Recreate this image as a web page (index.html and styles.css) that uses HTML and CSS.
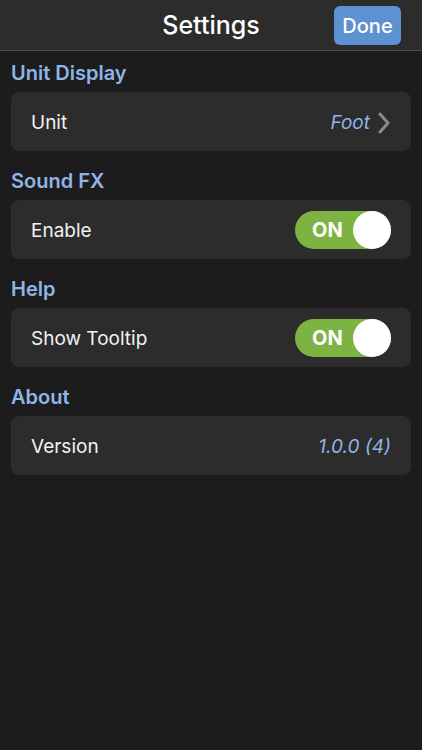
FILE: index.html
```html
<!DOCTYPE html>
<html lang="en">
<head>
    <meta charset="UTF-8">
    <meta name="viewport" content="width=device-width, initial-scale=1.0">
    <title>Settings</title>
    <link rel="stylesheet" href="styles.css">
</head>
<body>
    <nav class="navbar">
        <h1>Settings</h1>
        <a href="#" class="done-button">Done</a>
    </nav>

    <div class="container">
        <div class="section">
            <h2>Unit Display</h2>
            <div class="row">
                <span>Unit</span>
                <span class="value">Foot
                    <svg class="chevron" width="14" height="22" viewBox="0 0 14 22">
                        <path d="M3 2 L11 11 L3 20" fill="none" stroke="#8a8a8a" stroke-width="3" stroke-linecap="round" stroke-linejoin="round"/>
                    </svg>
                </span>
            </div>
        </div>

        <div class="section">
            <h2>Sound FX</h2>
            <div class="row">
                <span>Enable</span>
                <div class="toggle"><span>ON</span><div class="knob"></div></div>
            </div>
        </div>

        <div class="section">
            <h2>Help</h2>
            <div class="row">
                <span>Show Tooltip</span>
                <div class="toggle"><span>ON</span><div class="knob"></div></div>
            </div>
        </div>

        <div class="section">
            <h2>About</h2>
            <div class="row">
                <span>Version</span>
                <span class="value">1.0.0 (4)</span>
            </div>
        </div>
    </div>
</body>
</html>
```

FILE: styles.css
```css
* {
    margin: 0;
    padding: 0;
    box-sizing: border-box;
    font-family: 'Inter', 'Liberation Sans', sans-serif;
}

body {
    background-color: #1c1c1c;
    color: #f2f2f2;
    height: 750px;
}

.navbar {
    background-color: #2c2c2c;
    height: 51px;
    border-bottom: 1px solid #4a4a4a;
    display: flex;
    justify-content: center;
    align-items: center;
    position: relative;
}

.navbar h1 {
    font-size: 25px;
    font-weight: 500;
    color: #ffffff;
}

.done-button {
    position: absolute;
    right: 21px;
    top: 6px;
    width: 67px;
    height: 39px;
    background-color: #5d91d1;
    border-radius: 6px;
    color: #ffffff;
    font-size: 20px;
    font-weight: 500;
    text-decoration: none;
    display: flex;
    justify-content: center;
    align-items: center;
}

.container {
    padding: 0 11px;
}

.section {
    margin-top: 8px;
}

.section:first-child {
    margin-top: 0;
}

.section h2 {
    height: 41px;
    padding-top: 2px;
    display: flex;
    align-items: center;
    font-size: 20px;
    font-weight: 600;
    color: #8fb5e8;
}

.row {
    background-color: #2c2c2c;
    border-radius: 8px;
    height: 59px;
    padding: 2px 20px 0;
    display: flex;
    justify-content: space-between;
    align-items: center;
    font-size: 19px;
}

.value {
    color: #8fb5e8;
    font-style: italic;
    display: flex;
    align-items: center;
    gap: 7px;
}

.toggle {
    width: 96px;
    height: 38px;
    margin-top: -2px;
    border-radius: 19px;
    background-color: #7cb343;
    display: flex;
    align-items: center;
    justify-content: space-between;
    padding-left: 17px;
    font-size: 20px;
    font-weight: 700;
    color: #ffffff;
}

.knob {
    width: 38px;
    height: 38px;
    border-radius: 50%;
    background-color: #ffffff;
}
```
